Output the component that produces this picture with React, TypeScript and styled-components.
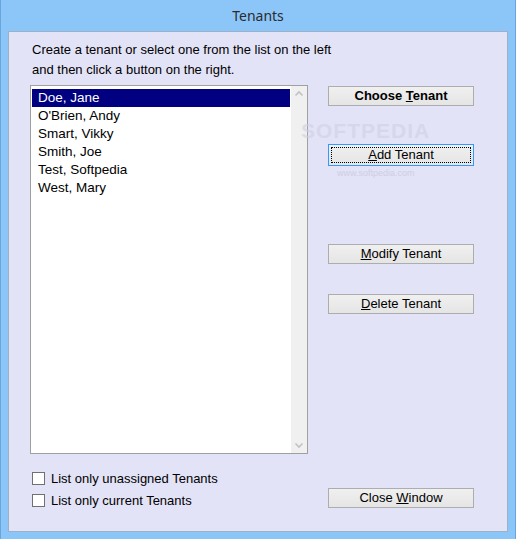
import styled, { createGlobalStyle } from 'styled-components'

const GlobalStyle = createGlobalStyle`
  html, body {
    margin: 0;
    padding: 0;
    background: #8cc6f8;
  }
  body {
    font-family: "Liberation Sans", Arial, sans-serif;
  }
`

type ButtonProps = {
  label: string;
  hot: number;
  top: number;
  bold?: boolean;
  focused?: boolean;
}

const tenants = ['Doe, Jane', "O'Brien, Andy", 'Smart, Vikky', 'Smith, Joe', 'Test, Softpedia', 'West, Mary']

function DlgButton({label, hot, top, bold, focused}: ButtonProps) {
  return (
    <Button $top={top} $bold={bold} $focused={focused}>
      <ButtonText $focused={focused}>
        <span>{label.slice(0, hot)}<u>{label[hot]}</u>{label.slice(hot + 1)}</span>
      </ButtonText>
    </Button>
  )
}

function Check({label}: {label: string}) {
  return (
    <CheckRow>
      <Box />
      <span>{label}</span>
    </CheckRow>
  )
}

export default function App() {
  return (
    <>
      <GlobalStyle />
      <Window>
        <TitleBar>Tenants</TitleBar>
        <Client>
          <Intro>
            Create a tenant or select one from the list on the left<br />
            and then click a button on the right.
          </Intro>
          <ListBox>
            <Items>
              {tenants.map((t, i) => (
                <Item key={t} $selected={i === 0}>{t}</Item>
              ))}
            </Items>
            <ScrollBar>
              <Arrow viewBox="0 0 16 16">
                <path d="M4.5 9.5 L8 6 L11.5 9.5" />
              </Arrow>
              <Arrow viewBox="0 0 16 16">
                <path d="M4.5 6.5 L8 10 L11.5 6.5" />
              </Arrow>
            </ScrollBar>
          </ListBox>
          <Buttons>
            <DlgButton label="Choose Tenant" hot={7} top={0} bold />
            <DlgButton label="Add Tenant" hot={0} top={38} focused />
            <DlgButton label="Modify Tenant" hot={0} top={78} />
            <DlgButton label="Delete Tenant" hot={0} top={30} />
          </Buttons>
          <Checks>
            <Check label="List only unassigned Tenants" />
            <Check label="List only current Tenants" />
          </Checks>
          <CloseSlot>
            <DlgButton label="Close Window" hot={6} top={0} />
          </CloseSlot>
          <Watermark>
            <Big>SOFTPEDIA</Big>
            <Small>www.softpedia.com</Small>
          </Watermark>
        </Client>
      </Window>
    </>
  )
}

const Window = styled.div`
  width: 516px;
  height: 539px;
  box-sizing: border-box;
  background: #8cc6f8;
  border-left: 1px solid #6aa6de;
  border-right: 1px solid #6aa6de;
  display: flex;
  flex-direction: column;
`

const TitleBar = styled.div`
  height: 31px;
  display: flex;
  align-items: center;
  justify-content: center;
  font-family: "Noto Sans", "Segoe UI", sans-serif;
  font-size: 14px;
  color: #2b2b2b;
  padding-bottom: 1px;
  box-sizing: border-box;
`

const Client = styled.div`
  position: relative;
  margin: 0 7px 7px 7px;
  flex: 1;
  background: #e3e3f7;
  border: 1px solid #9cb0c8;
  display: grid;
  grid-template-columns: 278px 146px;
  grid-template-rows: 45px 369px 1fr;
  column-gap: 20px;
  padding: 8px 0 0 21px;
  font-size: 13px;
  color: #000;
`

const Intro = styled.div`
  grid-column: 1 / span 2;
  padding-left: 2px;
  line-height: 20px;
  font-size: 13px;
`

const ListBox = styled.div`
  border: 1px solid #a0a0a0;
  background: #fff;
  display: flex;
  box-sizing: border-box;
`

const Items = styled.div`
  flex: 1;
  padding: 3px 1px 0 1px;
`

const Item = styled.div<{ $selected?: boolean }>`
  height: 18px;
  line-height: 18px;
  padding-left: 6px;
  font-size: 13.5px;
  background: ${p => (p.$selected ? '#000080' : 'transparent')};
  color: ${p => (p.$selected ? '#fff' : '#000')};
`

const ScrollBar = styled.div`
  width: 16px;
  background: #f0f0f0;
  display: flex;
  flex-direction: column;
  justify-content: space-between;
`

const Arrow = styled.svg`
  width: 16px;
  height: 16px;
  fill: none;
  stroke: #c2c2c2;
  stroke-width: 1.6;
`

const Buttons = styled.div`
  display: flex;
  flex-direction: column;
  padding-top: 1px;
`

const Button = styled.div<{ $top: number; $bold?: boolean; $focused?: boolean }>`
  margin-top: ${p => p.$top}px;
  width: 146px;
  height: ${p => (p.$focused ? 22 : 20)}px;
  box-sizing: border-box;
  border: 1px solid ${p => (p.$focused ? '#3399ff' : '#adadad')};
  background: linear-gradient(#f0f0f0, #e5e5e5);
  font-weight: ${p => (p.$bold ? 'bold' : 'normal')};
  font-size: 13px;
  display: flex;
  padding: ${p => (p.$focused ? 2 : 1)}px;
`

const ButtonText = styled.div<{ $focused?: boolean }>`
  flex: 1;
  display: flex;
  align-items: center;
  justify-content: center;
  outline: ${p => (p.$focused ? '1px dotted #000' : 'none')};
  outline-offset: -1px;
  line-height: 16px;
`

const Checks = styled.div`
  display: flex;
  flex-direction: column;
  gap: 9px;
  padding: 18px 0 0 2px;
`

const CheckRow = styled.div`
  display: flex;
  align-items: center;
  gap: 6px;
  height: 13px;
  font-size: 13px;
`

const Box = styled.div`
  width: 13px;
  height: 13px;
  box-sizing: border-box;
  border: 1px solid #707070;
  background: #fff;
`

const CloseSlot = styled.div`
  padding-top: 34px;
`

const Watermark = styled.div`
  position: absolute;
  left: 292px;
  top: 88px;
  width: 130px;
  height: 60px;
  pointer-events: none;
  opacity: 0.6;
`

const Big = styled.div`
  font-size: 21px;
  font-weight: bold;
  letter-spacing: 1px;
  color: #d0d0e4;
  line-height: 22px;
`

const Small = styled.div`
  position: absolute;
  left: 36px;
  top: 48px;
  font-size: 9px;
  line-height: 10px;
  color: #c0c0d6;
`
